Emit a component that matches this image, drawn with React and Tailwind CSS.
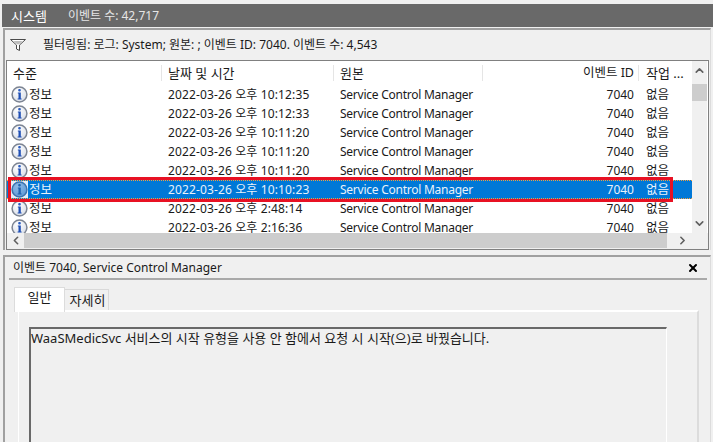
import { ChevronUp, ChevronDown, ChevronLeft, ChevronRight, X } from "lucide-react";

const font = { fontFamily: '"Noto Sans", "Noto Sans CJK KR", sans-serif' };

const rows = [
  "2022-03-26 오후 10:12:35",
  "2022-03-26 오후 10:12:33",
  "2022-03-26 오후 10:11:20",
  "2022-03-26 오후 10:11:20",
  "2022-03-26 오후 10:11:20",
  "2022-03-26 오후 10:10:23",
  "2022-03-26 오후 2:48:14",
  "2022-03-26 오후 2:16:36",
];

function InfoIcon({ selected }) {
  const gradientId = selected ? "infoFillSelected" : "infoFill";
  return (
    <svg width="17" height="17" viewBox="0 0 17 17" className={`shrink-0 ${selected ? "bg-[#e4eef8]" : ""}`}>
      <defs>
        <radialGradient id={gradientId} cx="0.4" cy="0.3" r="0.8">
          <stop offset="0" stopColor={selected ? "#8fbce8" : "#ffffff"} />
          <stop offset="1" stopColor={selected ? "#5a96d4" : "#d5dbe6"} />
        </radialGradient>
      </defs>
      <circle cx="8.5" cy="8.5" r="7.4" fill={`url(#${gradientId})`} stroke={selected ? "#3d73ad" : "#7c8492"} strokeWidth="1.5" />
      <rect x="7.2" y="3" width="2.6" height="2.4" rx="1" fill={selected ? "#1f63b0" : "#2a5cc0"} />
      <path d="M6.8 6.6h3v6h0.8v1H6.6v-1h0.9V7.6h-0.7z" fill={selected ? "#1f63b0" : "#1f4fb5"} />
    </svg>
  );
}

function FunnelIcon() {
  return (
    <svg width="16" height="12" viewBox="0 0 16 12">
      <path d="M0.5 0.5h15L9.5 6v5.5L6.5 10V6z" fill="#fff" stroke="#4a4a4a" strokeWidth="1" />
      <path d="M3.5 2h9L9 5.2H7z" fill="#bdbdbd" />
    </svg>
  );
}

function Row({ time, selected }) {
  return (
    <div
      className={`flex h-[19px] shrink-0 items-center ${
        selected
          ? "border-y border-dotted border-[#f0a040] bg-[#0078d7] text-[#e8f2fb]"
          : "bg-white text-[#1a1a1a]"
      }`}
    >
      <div className="flex w-[155px] shrink-0 items-center gap-[1px] pl-[4px]">
        <InfoIcon selected={selected} />
        <span className="text-[12.5px]">정보</span>
      </div>
      <div className="w-[172px] shrink-0 pl-[6px] tracking-[0.13px]">{time}</div>
      <div className="w-[149px] shrink-0 pl-[6px] tracking-[-0.25px]">Service Control Manager</div>
      <div className="w-[156px] shrink-0 pr-[5px] text-right">7040</div>
      <div className="w-[53px] shrink-0 pl-[7px] text-[12.5px]">없음</div>
    </div>
  );
}

export default function App() {
  return (
    <div className="relative h-[442px] w-[713px] overflow-hidden bg-[#f0f0f0] text-[12px] leading-[16px]" style={font}>
      <div className="pl-[2px] pt-[4px]">
        <div className="flex h-[23px] items-center gap-[21px] bg-[#696969] pl-[9px] text-white">
          <span className="text-[13px]">시스템</span>
          <span className="text-[#e6e6e6]">이벤트 수: 42,717</span>
        </div>
      </div>

      <div className="ml-[3px] mr-[2px] mt-[1px] border-l-2 border-r border-t-2 border-l-[#a0a0a0] border-r-[#dcdcdc] border-t-[#a0a0a0]">
        <div className="flex h-[30px] items-center gap-[17px] pl-[5px] text-[#1a1a1a]">
          <FunnelIcon />
          <span>필터링됨: 로그: System; 원본: ; 이벤트 ID: 7040. 이벤트 수: 4,543</span>
        </div>

        <div className="ml-[1px] mr-[1px] flex h-[190px] flex-col border border-[#808080]">
          <div className="flex h-[172px] bg-white">
            <div className="flex w-[685px] flex-col overflow-hidden">
              <div className="flex h-[24px] shrink-0 items-center text-[13px] text-[#1a1a1a]">
                <div className="w-[155px] shrink-0 border-r border-[#e5e5e5] pl-[6px]">수준</div>
                <div className="w-[172px] shrink-0 border-r border-[#e5e5e5] pl-[6px]">날짜 및 시간</div>
                <div className="w-[149px] shrink-0 border-r border-[#e5e5e5] pl-[6px]">원본</div>
                <div className="w-[156px] shrink-0 border-r border-[#e5e5e5] pr-[4px] text-right text-[12.5px]">이벤트 ID</div>
                <div className="w-[53px] shrink-0 pl-[7px]">작업 ...</div>
              </div>
              {rows.map((time, i) => (
                <Row key={i} time={time} selected={i === 5} />
              ))}
            </div>
            <div className="flex w-[15px] flex-col items-center bg-[#f0f0f0]">
              <ChevronUp size={13} strokeWidth={3} className="mt-[3px] text-[#606060]" />
              <div className="mt-[7px] h-[17px] w-full bg-[#cdcdcd]" />
              <div className="flex-1" />
              <ChevronDown size={13} strokeWidth={3} className="mb-[3px] text-[#606060]" />
            </div>
          </div>

          <div className="flex h-[16px] items-start bg-[#f0f0f0]">
            <ChevronLeft size={13} strokeWidth={3} className="ml-[1px] mt-[1px] w-[16px] text-[#606060]" />
            <div className="h-[15px] w-[643px] bg-[#cdcdcd]" />
            <ChevronRight size={13} strokeWidth={3} className="ml-[9px] mt-[1px] text-[#606060]" />
          </div>
        </div>
      </div>

      <div className="ml-[3px] mr-[2px] mt-[5px] border-l-2 border-r border-t-2 border-l-[#a0a0a0] border-r-[#dcdcdc] border-t-[#a0a0a0]">
        <div className="ml-[4px] mr-[3px] flex h-[23px] items-center justify-between border-b-2 border-[#a9a9a9] pl-[4px] pr-[8px] text-[#1a1a1a]">
          <span>이벤트 7040, Service Control Manager</span>
          <X size={12} strokeWidth={4} className="text-black" />
        </div>

        <div className="pl-[9px] pr-[11px] pt-[7px]">
          <div className="relative z-10 flex items-end">
            <div className="mb-[-2px] flex h-[25px] w-[51px] items-center justify-center border border-b-0 border-[#dcdcdc] bg-white pb-[6px] text-[13px] text-[#1a1a1a]">일반</div>
            <div className="flex h-[21px] w-[44px] items-center justify-center border border-b-0 border-l-0 border-[#d9d9d9] pl-[2px] text-[13px] text-[#1a1a1a]">자세히</div>
          </div>
          <div className="ml-[4px] h-[140px] border-l border-r-2 border-t-2 border-l-white border-r-[#dcdcdc] border-t-white pl-[10px] pr-[30px] pt-[15px]">
            <div className="h-[120px] border-l-2 border-r border-t-2 border-l-[#696969] border-r-white border-t-[#696969] pt-[1px] text-[13px] text-[#1a1a1a]">
              WaaSMedicSvc 서비스의 시작 유형을 사용 안 함에서 요청 시 시작(으)로 바꿨습니다.
            </div>
          </div>
        </div>
      </div>

      <div className="absolute left-[8px] top-[177px] h-[25px] w-[665px] border-[3px] border-[#e81123]" />
    </div>
  );
}
